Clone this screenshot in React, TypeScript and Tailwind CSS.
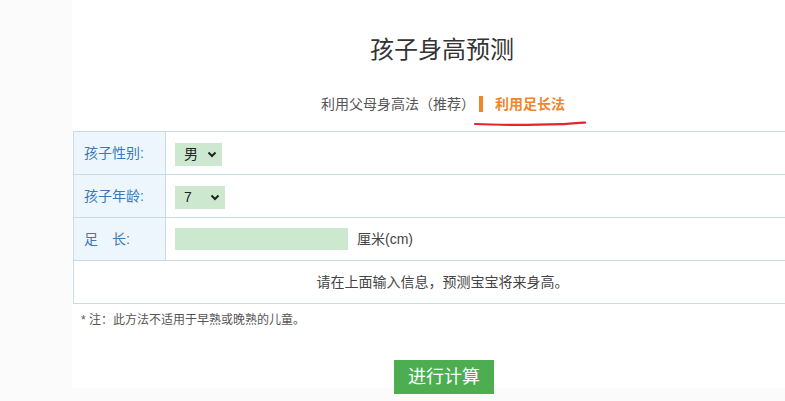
import { useState } from "react";

const font = { fontFamily: '"Liberation Sans", "Noto Sans CJK SC", sans-serif' };

const Chevron = () => (
  <svg width="10" height="7" viewBox="0 0 10 7" className="pointer-events-none absolute right-[5px] top-[9px]">
    <path d="M1.5 1.5 L5 5 L8.5 1.5" fill="none" stroke="#222" strokeWidth="2" />
  </svg>
);

const GreenSelect = ({ value, options, width }: { value: string; options: string[]; width: string }) => {
  const [v, setV] = useState(value);
  return (
    <div className={`relative h-[23px] ${width}`}>
      <select
        value={v}
        onChange={(e) => setV(e.target.value)}
        className="h-full w-full appearance-none bg-[#cce8cf] pl-[9px] text-[14px] text-[#222] outline-none"
      >
        {options.map((o) => (
          <option key={o}>{o}</option>
        ))}
      </select>
      <Chevron />
    </div>
  );
};

const Label = ({ children }: { children: React.ReactNode }) => (
  <td className="w-[92px] border border-[#c8dbe8] bg-[#eef6fd] pl-[10px] text-[14px] text-[#3d79b6]">{children}</td>
);

const App = () => {
  return (
    <div className="h-[401px] overflow-hidden bg-[#fbfbfb]" style={font}>
      <div className="ml-[72px] h-[388px] w-[740px] bg-white">
        <h1 className="pt-[34px] text-center text-[24px] leading-[32px] text-[#333]">孩子身高预测</h1>

        <div className="mt-[22px] flex h-[32px] items-center justify-center gap-[4px] pl-[2px] text-[14px]">
          <span className="text-[#555]">利用父母身高法（推荐）</span>
          <span className="h-[16px] w-[4px] bg-[#f0862a]" />
          <span className="relative ml-[8px] font-bold text-[#f0862a]">
            利用足长法
            <svg width="114" height="8" viewBox="0 0 114 8" className="absolute left-[-21px] top-[25px]">
              <path d="M1 5 C30 6.5 60 6 88 5.2 C96 5 104 3.4 111 3.6" fill="none" stroke="#e3262b" strokeWidth="2.2" strokeLinecap="round" />
            </svg>
          </span>
        </div>

        <table className="mt-[11px] ml-[1px] w-[739px] border-collapse">
          <tbody>
            <tr className="h-[43px]">
              <Label>孩子性别:</Label>
              <td className="border border-[#c8dbe8] pl-[9px]">
                <GreenSelect value="男" options={["男", "女"]} width="w-[47px]" />
              </td>
            </tr>
            <tr className="h-[43px]">
              <Label>孩子年龄:</Label>
              <td className="border border-[#c8dbe8] pl-[9px]">
                <GreenSelect value="7" options={["3", "4", "5", "6", "7", "8", "9", "10"]} width="w-[50px]" />
              </td>
            </tr>
            <tr className="h-[43px]">
              <Label>足　长:</Label>
              <td className="border border-[#c8dbe8] pl-[9px]">
                <div className="flex items-center gap-[9px]">
                  <input className="h-[22px] w-[173px] bg-[#cce8cf] px-[4px] text-[14px] outline-none" />
                  <span className="text-[14px] text-[#444]">厘米(cm)</span>
                </div>
              </td>
            </tr>
            <tr className="h-[43px]">
              <td colSpan={2} className="border border-[#c8dbe8] text-center text-[14px] text-[#444]">
                请在上面输入信息，预测宝宝将来身高。
              </td>
            </tr>
          </tbody>
        </table>

        <p className="mt-[7px] pl-[9px] text-[12px] text-[#555]">* 注：此方法不适用于早熟或晚熟的儿童。</p>

        <div className="mt-[31px] flex justify-center pl-[4px]">
          <button className="h-[34px] w-[100px] bg-[#4cae50] text-[18px] text-white">进行计算</button>
        </div>
      </div>
    </div>
  );
};

export default App;
